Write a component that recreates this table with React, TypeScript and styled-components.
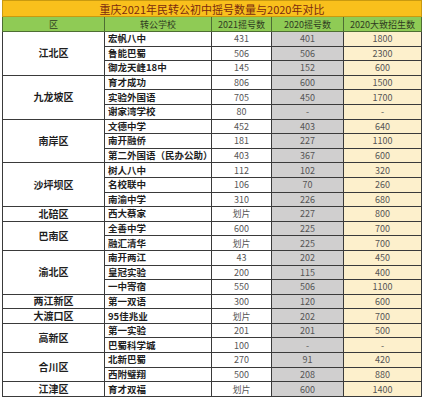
import React from "react";
import styled, { createGlobalStyle } from "styled-components";

const GlobalStyle = createGlobalStyle`
  html, body {
    margin: 0;
    padding: 0;
    background: #ffffff;
  }
  body {
    font-family: "Noto Sans CJK SC", "Liberation Sans", sans-serif;
  }
`;

const Page = styled.div`
  width: 422px;
  height: 400px;
  padding: 0 1px 0 2px;
  box-sizing: border-box;
  background: #fff;
  overflow: hidden;
`;

const Table = styled.table`
  width: 419px;
  border-collapse: collapse;
  table-layout: fixed;
`;

const Row = styled.tr<{ $h: number }>`
  height: ${(p) => p.$h}px;
`;

const TitleCell = styled.td`
  padding: 0;
  background: #f9c01c;
  color: #7a2a10;
  font-size: 11px;
  line-height: 12px;
  text-align: center;
  border: 1px solid #c99a10;
  white-space: nowrap;
  overflow: hidden;
`;

const HeadCell = styled.td`
  padding: 0;
  background: #8fcb55;
  color: #2f3b22;
  font-size: 9px;
  line-height: 11px;
  text-align: center;
  border: 1px solid #4e6e33;
  white-space: nowrap;
  overflow: hidden;
`;

const DistrictCell = styled.td`
  padding: 0;
  color: #1e1e1e;
  font-size: 10px;
  font-weight: 700;
  line-height: 12px;
  text-align: center;
  vertical-align: middle;
  border: 1px solid #3a3a3a;
  background: #fff;
  white-space: nowrap;
`;

const SchoolCell = styled.td`
  padding: 0 0 0 3px;
  color: #1e1e1e;
  font-size: 9.5px;
  font-weight: 700;
  line-height: 11px;
  text-align: left;
  border: 1px solid #3a3a3a;
  white-space: nowrap;
  overflow: hidden;
`;

const NumCell = styled.td<{ $bg: string }>`
  padding: 0;
  background: ${(p) => p.$bg};
  color: #555;
  font-size: 9px;
  line-height: 11px;
  text-align: center;
  border: 1px solid #3a3a3a;
  white-space: nowrap;
  overflow: hidden;
`;

type School = [string, string, string, string];
type District = { name: string; schools: School[] };

const data: District[] = [
  {
    name: "江北区",
    schools: [
      ["宏帆八中", "431", "401", "1800"],
      ["鲁能巴蜀", "506", "506", "2300"],
      ["御龙天峰18中", "145", "152", "600"],
    ],
  },
  {
    name: "九龙坡区",
    schools: [
      ["育才成功", "806", "600", "1500"],
      ["实验外国语", "705", "450", "1700"],
      ["谢家湾学校", "80", "-", "-"],
    ],
  },
  {
    name: "南岸区",
    schools: [
      ["文德中学", "452", "403", "640"],
      ["南开融侨", "181", "227", "1100"],
      ["第二外国语（民办公助）", "403", "367", "600"],
    ],
  },
  {
    name: "沙坪坝区",
    schools: [
      ["树人八中", "112", "102", "320"],
      ["名校联中", "106", "70", "260"],
      ["南渝中学", "310", "226", "680"],
    ],
  },
  { name: "北碚区", schools: [["西大蔡家", "划片", "227", "800"]] },
  {
    name: "巴南区",
    schools: [
      ["全善中学", "600", "225", "700"],
      ["融汇清华", "划片", "225", "700"],
    ],
  },
  {
    name: "渝北区",
    schools: [
      ["南开两江", "43", "202", "450"],
      ["皇冠实验", "200", "115", "400"],
      ["一中寄宿", "550", "506", "1100"],
    ],
  },
  { name: "两江新区", schools: [["第一双语", "300", "120", "600"]] },
  { name: "大渡口区", schools: [["95佳兆业", "划片", "202", "700"]] },
  {
    name: "高新区",
    schools: [
      ["第一实验", "201", "201", "500"],
      ["巴蜀科学城", "100", "-", "-"],
    ],
  },
  {
    name: "合川区",
    schools: [
      ["北新巴蜀", "270", "91", "420"],
      ["西附璧翔", "500", "208", "880"],
    ],
  },
  { name: "江津区", schools: [["育才双福", "划片", "600", "1400"]] },
];

const numColours = ["#ffffff", "#d0cfcf", "#fdf0cc"];

const App = (): React.ReactElement => {
  return (
    <Page>
      <GlobalStyle />
      <Table>
        <colgroup>
          <col style={{ width: 102 }} />
          <col style={{ width: 107 }} />
          <col style={{ width: 60 }} />
          <col style={{ width: 72 }} />
          <col style={{ width: 78 }} />
        </colgroup>
        <tbody>
          <Row $h={16}>
            <TitleCell colSpan={5}>重庆2021年民转公初中摇号数量与2020年对比</TitleCell>
          </Row>
          <Row $h={15}>
            <HeadCell>区</HeadCell>
            <HeadCell>转公学校</HeadCell>
            <HeadCell>2021摇号数</HeadCell>
            <HeadCell>2020摇号数</HeadCell>
            <HeadCell>2020大致招生数</HeadCell>
          </Row>
          {data.map((d) =>
            d.schools.map((s, i) => (
              <Row $h={14.6} key={d.name + s[0]}>
                {i === 0 && (
                  <DistrictCell rowSpan={d.schools.length}>{d.name}</DistrictCell>
                )}
                <SchoolCell>{s[0]}</SchoolCell>
                {s.slice(1).map((v, j) => (
                  <NumCell key={j} $bg={numColours[j]}>
                    {v}
                  </NumCell>
                ))}
              </Row>
            ))
          )}
        </tbody>
      </Table>
    </Page>
  );
};

export default App;
